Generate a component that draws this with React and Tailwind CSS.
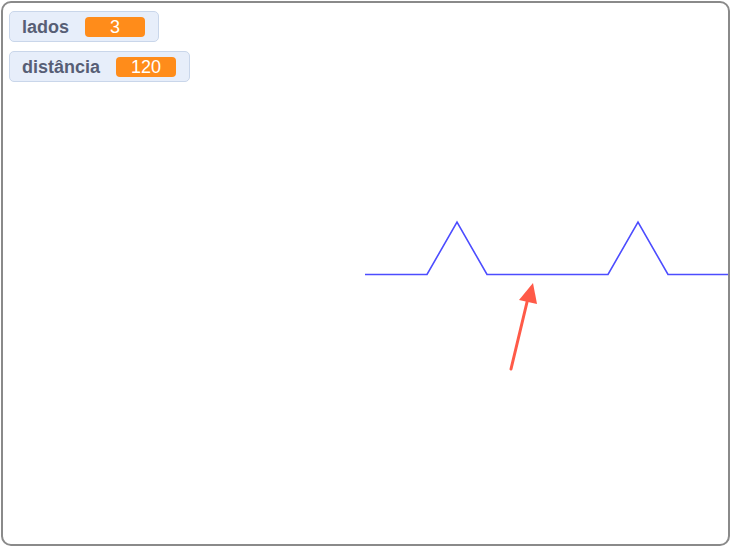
import React from "react";

const MONITORS = [
  { label: "lados", value: "3" },
  { label: "distância", value: "120" },
];

function Monitor({ label, value }) {
  return (
    <div className="flex items-center gap-[16px] h-[31px] pl-[12px] pr-[13px] rounded-[5px] border border-[#c9d6ea] bg-[#e7eefa]">
      <span className="text-[18px] font-bold text-[#575e75] leading-none">{label}</span>
      <span className="min-w-[60px] h-[20px] px-2 flex items-center justify-center rounded-[4px] bg-[#ff8c1a] text-white text-[18px] leading-none">
        {value}
      </span>
    </div>
  );
}

export default function App() {
  return (
    <div className="w-[731px] h-[547px] bg-white p-px" style={{ fontFamily: '"Liberation Sans", Arial, sans-serif' }}>
      <div className="relative w-full h-full rounded-[10px] border-2 border-[#8a8a8a] bg-white overflow-hidden">
        <div className="flex flex-col items-start gap-[9px] pl-[6px] pt-[8px]">
          {MONITORS.map((m) => (
            <Monitor key={m.label} {...m} />
          ))}
        </div>

        {/* stage: pen trail and pointer arrow */}
        <svg className="absolute -left-[3px] -top-[3px]" width="731" height="547" viewBox="0 0 731 547">
          <polyline
            points="365,274.5 427,274.5 457,222 487,274.5 608,274.5 638,222 668,274.5 729,274.5"
            fill="none"
            stroke="#4d4dff"
            strokeWidth="1.6"
            strokeLinejoin="miter"
          />
          <line x1="511" y1="369" x2="528" y2="298" stroke="#ff5a48" strokeWidth="3" strokeLinecap="round" />
          <polygon points="533,283 537,304 519,300" fill="#ff5a48" />
        </svg>
      </div>
    </div>
  );
}
